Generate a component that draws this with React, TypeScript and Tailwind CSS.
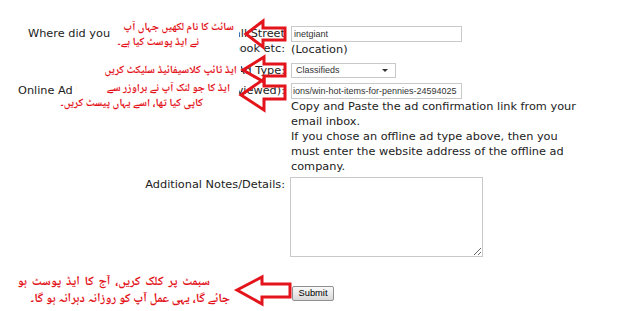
export default function App() {
  const urdu =
    "font-['Noto_Naskh_Arabic','Noto_Sans_Arabic','DejaVu_Sans',sans-serif] font-bold text-[#e3141b] leading-[15px] whitespace-nowrap";
  const field =
    "border border-[#c9c9c9] bg-white font-['Liberation_Sans',Arial,sans-serif] text-[9px] text-[#333] outline-none";
  return (
    <div className="relative w-[640px] h-[311px] bg-white overflow-hidden font-['DejaVu_Sans',sans-serif] text-[11.3px] leading-[15px] text-[#222]">
      <div className="pt-[26px] flex flex-col">
        {/* Row 1 */}
        <div className="flex">
          <div className="w-[285px] shrink-0">
            <div className="flex justify-between pl-[28px]">
              <span>Where did you</span>
              <span>post, e.g. Wall Street</span>
            </div>
            <div className="text-right">Journal, Facebook etc:</div>
          </div>
          <div className="pl-[6px]">
            <input
              readOnly
              defaultValue="inetgiant"
              className={`${field} block w-[171px] h-[16px] px-[2px]`}
            />
            <div>(Location)</div>
          </div>
        </div>
        {/* Row 2 */}
        <div className="flex mt-[6px]">
          <div className="w-[285px] shrink-0 text-right">Online Ad Type:</div>
          <div className="pl-[6px]">
            <div className="relative w-[105px] h-[15px]">
              <select
                defaultValue="Classifieds"
                className={`${field} appearance-none block w-[105px] h-[15px] pl-[4px] leading-[13px]`}
              >
                <option>Classifieds</option>
              </select>
              <span className="absolute right-[8px] top-[6px] w-0 h-0 border-l-[3px] border-r-[3px] border-t-[3px] border-l-transparent border-r-transparent border-t-[#333]" />
            </div>
          </div>
        </div>
        {/* Row 3 */}
        <div className="flex mt-[5px]">
          <div className="w-[285px] shrink-0">
            <div className="flex justify-between pl-[18px]">
              <span>Online Ad URL</span>
              <span>(where it can be viewed):</span>
            </div>
          </div>
          <div className="pl-[6px]">
            <input
              readOnly
              defaultValue="ions/win-hot-items-for-pennies-24594025"
              className={`${field} block w-[171px] h-[16px] px-[1px]`}
            />
            <div className="w-[290px]">
              Copy and Paste the ad confirmation link from your email inbox.
            </div>
            <div className="w-[290px]">
              If you chose an offline ad type above, then you must enter the
              website address of the offline ad company.
            </div>
          </div>
        </div>
        {/* Row 4 */}
        <div className="flex mt-[3px]">
          <div className="w-[285px] shrink-0 text-right">Additional Notes/Details:</div>
          <div className="pl-[5px]">
            <textarea className="block w-[193px] h-[80px] border border-[#c9c9c9] bg-white outline-none" />
          </div>
        </div>
        {/* Row 5 */}
        <div className="flex mt-[29px]">
          <div className="w-[285px] shrink-0" />
          <div className="pl-[7px]">
            <button className="block w-[42px] h-[15px] border border-[#8f8f8f] rounded-[2px] bg-linear-to-b from-[#fafafa] to-[#d9d9d9] font-['Liberation_Sans',Arial,sans-serif] text-[9.3px] leading-none text-black">
              Submit
            </button>
          </div>
        </div>
      </div>

      {/* Annotation 1 */}
      <div dir="rtl" className="absolute left-[112px] top-[19px] w-[127px] h-[40px] bg-white flex flex-col items-start pt-[1px]">
        <div className={`${urdu} text-[11px] pr-[5px]`}>سائٹ کا نام لکھیں جہاں آپ</div>
        <div className={`${urdu} text-[11px] pr-[40px]`}>نے ایڈ پوسٹ کیا ہے۔</div>
      </div>
      {/* Annotation 2 */}
      <div dir="rtl" className="absolute left-[95px] top-[61px] w-[146px] h-[20px] bg-white flex flex-col items-start pt-[2px]">
        <div className={`${urdu} text-[11px] pr-[4px]`}>ایڈ ٹائپ کلاسیفائیڈ سلیکٹ کریں</div>
      </div>
      {/* Annotation 3 */}
      <div dir="rtl" className="absolute left-[77px] top-[81px] w-[162px] h-[33px] bg-white flex flex-col items-start">
        <div className={`${urdu} text-[11px] pr-[9px]`}>ایڈ کا جو لنک آپ نے براوزر سے</div>
        <div className={`${urdu} text-[11px] pr-[36px]`}>کاپی کیا تھا، اسے یہاں پیسٹ کریں۔</div>
      </div>
      {/* Annotation 4 */}
      <div dir="rtl" className="absolute left-[20px] top-[275px] w-[212px] flex flex-col items-start gap-[2px]">
        <div className={`${urdu} text-[12.5px] pr-[22px] [word-spacing:2px]`}>سبمٹ پر کلک کریں، آج کا ایڈ پوسٹ ہو</div>
        <div className={`${urdu} text-[12.5px] pr-[2px]`}>جائے گا، یہی عمل آپ کو روزانہ دہرانہ ہو گا۔</div>
      </div>

      {/* Arrows */}
      <svg
        className="absolute left-0 top-0 pointer-events-none"
        width="640"
        height="311"
        viewBox="0 0 640 311"
      >
        <g fill="none" stroke="#e3141b" strokeWidth="3" strokeLinejoin="miter">
          <polygon points="246,34 263,21 263,28 285,28 285,40 263,40 263,47" />
          <polygon points="243,70 264,57 264,64 285,64 285,76 264,76 264,82" />
          <polygon points="241,95 264,79 264,86 285,86 285,99 264,99 264,110" />
          <polygon points="237,290 262,277 262,284 290,284 290,297 262,297 262,304" />
        </g>
      </svg>
    </div>
  );
}
